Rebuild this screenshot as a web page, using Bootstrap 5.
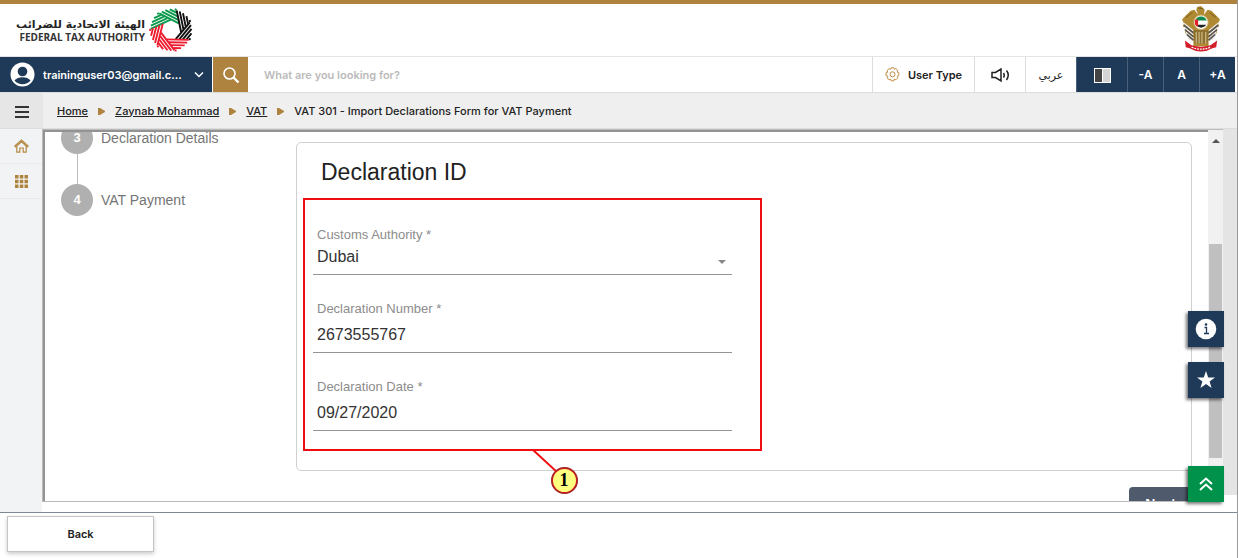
<!DOCTYPE html>
<html lang="en">
<head>
<meta charset="utf-8">
<meta name="viewport" content="width=device-width, initial-scale=1">
<title>VAT 301 - Import Declarations Form for VAT Payment</title>
<link href="https://cdn.jsdelivr.net/npm/bootstrap@5.3.0/dist/css/bootstrap.min.css" rel="stylesheet">
<style>
:root{--navy:#1f3a58;--gold:#ad833f;--form:"Liberation Sans",Arial,sans-serif}
body{font:500 11px/16px Inter,"DejaVu Sans",sans-serif;color:#222;background:#fff;overflow:hidden}
button,input,select{font:inherit;color:inherit}
.page{height:100vh;border-right:1px solid #999}
.brandbar{border-top:4px solid var(--gold);height:57px;border-bottom:1px solid #e4e4e4;padding:0 17px 0 17px}
.brandname{width:128px;text-align:right;white-space:nowrap}
.brand-ar{font:700 11px/13px "DejaVu Sans",sans-serif}
.brand-en{font:700 10px/12px "Open Sans",sans-serif;color:#333}
.toolbar{height:36px;border-bottom:1px solid #ddd;padding-right:2px}
.toolbar button{border:0;border-left:1px solid #ddd;background:#fff;border-radius:0;padding:0}
.toolbar .user{width:212px;background:var(--navy);color:#fff;padding:0 8px 0 10px;border:0;font-weight:600}
.toolbar .find{width:36px;background:var(--gold);border-left:1px solid #fff}
.toolbar input{border:0;outline:0;padding:0 16px;min-width:0;font-weight:600}
.toolbar input::placeholder{color:#bbb;opacity:1}
.toolbar .kind{width:102px;font-weight:600}
.toolbar .mid{width:51px}
.toolbar .dark{background:var(--navy);color:#fff;width:36px;font-weight:600;font-size:12px;border-color:#4a6079}
.toolbar .dark.mid{width:51px}
.crumbs{height:36px;background:#efefef;border-bottom:1px solid #ddd}
.menu{width:43px;background:#e6e6e6;border:0}
.crumbs a{color:#222}
.crumbs ol{gap:10px;padding-left:14px}
.side{width:42px;background:#f2f3f5}
.side a{height:35px;border-bottom:1px solid #e9eaec}
.frame{border:1px solid #bbb;border-width:1px 0 1px 1px;margin-bottom:10px}
.pane{border:2px solid #939393;border-width:2px 0 0 2px;overflow:hidden;font-family:var(--form);font-weight:400}
.scrolled{margin-top:-10px;padding:0 16px}
.steps{width:235px;color:#757575;font-size:14px}
.dot{width:32px;height:32px;border-radius:50%;background:#b0b0b0;color:#fff;font-size:13px;font-weight:700;opacity:1}
.link{width:1px;height:30px;background:#bdbdbd;margin-left:16px}
.form-card{border:1px solid #d0d0d0;border-radius:5px;margin-top:20px;padding:0 6px 19px}
.form-card h1{font-size:23px;line-height:28px;margin:15px 0 12px 18px;font-weight:400}
.marked{border:2px solid #f00d12;max-width:459px;padding:25px 28px 18px 8px}
.entry{border-bottom:1px solid #949494;padding:0 4px}
.entry label{font-size:13px;line-height:20px;color:#8c8c8c;display:block}
.entry input,.entry select{border:0;outline:0;width:100%;padding:0;background:none;appearance:none;font-size:16px;height:24px;display:block;color:#333}
.entry.pick{height:50px}
.entry.text{height:54px}
.caret{right:6px;bottom:10px;border:4px solid transparent;border-top-color:#888;border-bottom:0}
.leader{left:50%;top:100%;margin-left:-2px}
.callnum{left:50%;top:100%;margin:18px 0 0 18px;width:27px;height:27px;border-radius:50%;border:2px solid #d81015;outline:1px solid #5558;outline-offset:-1px;background:#ffff80;color:#000;font:700 18px/23px "Liberation Serif",serif;text-align:center}
.next{background:#4f5b6d;color:#fff;border:0;border-radius:4px;width:63px;height:34px;margin-top:16px;font:700 14px/20px var(--form)}
.track{width:15px;background:#f1f1f1}
.arrow{border:4px solid transparent;border-bottom-color:#555;border-top:0;margin-top:9px}
.thumb{width:13px;background:#c0c0c0;margin-top:101px;margin-bottom:43px}
.edge{width:14px;background:#e4e4e4;margin-bottom:17px}
.floats{right:14px;bottom:56px}
.floats a{width:36px;height:36px;background:var(--navy);box-shadow:-2px 2px 3px #0008}
.floats .info{margin-bottom:15px}
.floats .star{margin-bottom:68px}
.floats a.up{background:#00924a}
.foot{border-top:1px solid #7d8a96;padding:3px 7px 6px}
.back{width:147px;height:36px;border:1px solid #c4c4c8;background:#fff;box-shadow:0 2px 4px #0003;font-weight:600}
</style>
</head>
<body>
<div class="page d-flex flex-column">
<header class="brandbar d-flex flex-shrink-0 justify-content-between align-items-center">
  <div class="d-flex align-items-center gap-1">
    <div class="brandname"><div class="brand-ar" lang="ar" dir="rtl">الهيئة الاتحادية للضرائب</div><div class="brand-en">FEDERAL TAX AUTHORITY</div></div>
    <svg width="44" height="44" viewBox="-22 -22 44 44" fill="none" stroke-width="1.9" aria-label="Federal Tax Authority">
      <defs><g id="blade"><path d="M4-9.500H-18M1.800-12.300H-16.500M-.4-15.100H-14M-2.600-17.900H-10.500M-4-20.300H-6"/></g></defs>
      <g transform="rotate(12)">
      <g stroke="#0a9a4c"><use href="#blade" transform="rotate(15)"/><use href="#blade" transform="rotate(-36.400)"/></g>
      <g stroke="#111"><use href="#blade" transform="rotate(66.400)"/><use href="#blade" transform="rotate(117.900)"/></g>
      <g stroke="#ee1c2e"><use href="#blade" transform="rotate(169.300)"/><use href="#blade" transform="rotate(220.700)"/><use href="#blade" transform="rotate(272.100)"/></g>
      </g>
    </svg>
  </div>
  <svg width="38" height="48" viewBox="0 0 40 50" preserveAspectRatio="none" aria-label="United Arab Emirates emblem">
    <path d="M17 9 13 4 9 5 4 10 0 14 2 18 1 21 4 24 3 28 7 30 7 34 12 37 12 42H28V37L33 34 33 30 37 28 36 24 39 21 38 18 40 14 36 10 31 5 27 4 23 9 24 4 20 0 16 1 15 4Z" fill="#b08a32"/>
    <path d="M2 18 12 26M2 22l10 8M4 27l8 7M6 32l6 5M38 18l-10 8M38 22l-10 8M36 27l-8 7M34 32l-6 5" stroke="#eee" stroke-width="1.400"/>
    <path d="M2 20l10 8M3 24.500l9 7.500M5 29.500l7 6M38 20l-10 8M37 24.500l-9 7.500M35 29.500l-7 6" stroke="#555" stroke-width="1.600"/>
    <path d="M12 25h16l-1 14H13Z" fill="#8e7130"/><path d="M15 27v12M18 27v12M21 27v12M25 27v12" stroke="#ddcf9f"/>
    <path d="M4 12 11 7M29 7l7 5M17 2l5 1" stroke="#785b1d"/>
    <circle cx="20" cy="17" r="7.500" fill="#fff" stroke="#c8b06c"/>
    <path d="M14 15a6.500 6.500 0 0 1 12 0Z" fill="#0a8a4c"/><path d="M14.500 19.500h11a6.500 6.500 0 0 1-11 0Z" fill="#222"/><path d="M14 14h3v7h-2a7 7 0 0 1-1-7Z" fill="#e0202a"/>
    <path d="M3 36 10 41Q20 44 30 41L37 36 36 43 32 44Q20 51 8 44L4 43Z" fill="#d31f2b"/>
    <path d="M10 43Q20 47 30 43" stroke="#fff" stroke-width="1.300" stroke-dasharray="2 1" fill="none"/>
  </svg>
</header>
<nav class="toolbar d-flex align-items-stretch flex-shrink-0" aria-label="Tools">
  <button class="user d-flex align-items-center">
    <svg width="25" height="25" viewBox="0 0 25 25"><circle cx="12.500" cy="12.500" r="12" fill="#fff"/><circle cx="12.500" cy="9.500" r="4.800" fill="#1f3a58"/><path d="M4.500 18.500c3-4.500 13-4.500 16 0-4 5-12 5-16 0Z" fill="#1f3a58"/></svg>
    <span class="ms-2">traininguser03@gmail.c...</span>
    <svg class="ms-auto" width="10" height="8" fill="none" stroke="#fff" stroke-width="1.500"><path d="m1 1.500 4 4 4-4"/></svg>
  </button>
  <button class="find" aria-label="Search"><svg width="18" height="18" fill="none" stroke="#fff" stroke-width="1.600"><circle cx="7.500" cy="7.500" r="5.500"/><path d="m11.500 11.500 5 5" stroke-width="2.400"/></svg></button>
  <input class="flex-grow-1" type="search" placeholder="What are you looking for?" aria-label="Search the site">
  <button class="kind d-flex align-items-center justify-content-center gap-2">
    <svg width="15" height="15" viewBox="0 0 15 15" fill="none" stroke="#c28b45"><path d="M6.200.8h2.600l.5 1.500 1.500-.7 2.100 2-.8 1.500 1.700.7v2.800l-1.700.6.8 1.600-2 2-1.600-.7-.5 1.700H6.200l-.6-1.700-1.500.7-2.100-2 .8-1.600L1 8.600V5.800l1.800-.7L2 3.600l2.100-2 1.500.7Z"/><circle cx="7.500" cy="7.300" r="2.500"/></svg>User Type</button>
  <button class="mid" aria-label="Listen"><svg width="19" height="15" fill="none" stroke="#222" stroke-width="1.500"><path d="M1 4.500h3.500L10 1v12L4.500 9.500H1ZM12.500 5q1.500 2.500 0 4.500M15.500 2.500q3.500 4.500 0 9.500"/></svg></button>
  <button class="mid" lang="ar">عربي</button>
  <button class="dark mid" aria-label="Contrast"><svg width="17" height="15"><path d="M0 0h17v15H0Z" fill="#fff"/><path d="M1 1h7v13H1Z" fill="#444"/><path d="M9 1h7v13H9Z" fill="#d5d5d5"/></svg></button>
  <button class="dark">-A</button><button class="dark">A</button><button class="dark">+A</button>
</nav>
<div class="crumbs d-flex align-items-stretch flex-shrink-0">
  <button class="menu" aria-label="Menu"><svg width="14" height="12" stroke="#333" stroke-width="1.800"><path d="M0 1h14M0 6h14M0 11h14"/></svg></button>
  <ol class="list-unstyled d-flex align-items-center mb-0">
    <li><a href="#">Home</a></li><li aria-hidden="true"><svg width="7" height="8"><path d="M0 0h2l5 3v1L2 7H0Z" fill="#ad833f"/></svg></li>
    <li><a href="#">Zaynab Mohammad</a></li><li aria-hidden="true"><svg width="7" height="8"><path d="M0 0h2l5 3v1L2 7H0Z" fill="#ad833f"/></svg></li>
    <li><a href="#">VAT</a></li><li aria-hidden="true"><svg width="7" height="8"><path d="M0 0h2l5 3v1L2 7H0Z" fill="#ad833f"/></svg></li>
    <li>VAT 301 - Import Declarations Form for VAT Payment</li>
  </ol>
</div>
<div class="d-flex flex-grow-1" style="min-height:0">
  <nav class="side flex-shrink-0" aria-label="Sections">
    <a href="#" class="d-flex align-items-center justify-content-center" aria-label="Dashboard"><svg width="15" height="14" viewBox="0 0 15 14" fill="none" stroke="#b58a45" stroke-width="1.200"><path d="m.8 7 6.700-6 6.700 6-1 .9-5.700-5-5.700 5ZM2.800 7.500v5.700h3V9h3.400v4.200h3V7.500"/></svg></a>
    <a href="#" class="d-flex align-items-center justify-content-center" aria-label="Services"><svg width="13" height="13" fill="#ad833f"><path d="M0 0h3.500v3.500H0ZM4.800 0h3.500v3.500H4.800ZM9.500 0H13v3.500H9.500ZM0 4.800h3.500v3.500H0ZM4.800 4.800h3.500v3.500H4.800ZM9.500 4.800H13v3.500H9.500ZM0 9.500h3.500V13H0ZM4.800 9.500h3.500V13H4.800ZM9.500 9.500H13V13H9.500Z"/></svg></a>
  </nav>
  <div class="frame d-flex flex-grow-1">
    <main class="pane flex-grow-1">
      <div class="scrolled">
        <div class="d-flex">
          <aside class="steps flex-shrink-0">
            <div class="d-flex align-items-center gap-2"><span class="dot d-flex align-items-center justify-content-center">3</span>Declaration Details</div>
            <div class="link"></div>
            <div class="d-flex align-items-center gap-2"><span class="dot d-flex align-items-center justify-content-center">4</span>VAT Payment</div>
          </aside>
          <form class="form-card flex-grow-1">
            <h1>Declaration ID</h1>
            <div class="marked position-relative d-flex flex-column">
              <div class="entry pick position-relative"><label for="auth">Customs Authority *</label><select id="auth"><option>Dubai</option></select><span class="caret position-absolute"></span></div>
              <div class="entry text mt-4"><label for="num">Declaration Number *</label><input id="num" class="mt-1" type="text" value="2673555767"></div>
              <div class="entry text mt-4"><label for="date">Declaration Date *</label><input id="date" class="mt-1" type="text" value="09/27/2020"></div>
              <svg class="leader position-absolute" width="26" height="24" stroke="#f00d12" stroke-width="2"><path d="m1 0 25 23"/></svg>
              <span class="callnum position-absolute">1</span>
            </div>
          </form>
        </div>
        <div class="text-end"><button class="next">Next</button></div>
      </div>
    </main>
    <div class="track d-flex flex-column align-items-center" aria-hidden="true"><span class="arrow"></span><span class="thumb flex-grow-1"></span></div>
  </div>
  <div class="edge flex-shrink-0"></div>
</div>
<footer class="foot"><button class="back">Back</button></footer>
</div>
<div class="floats position-fixed d-flex flex-column">
  <a href="#" class="info d-flex align-items-center justify-content-center" aria-label="Information"><svg width="22" height="22"><circle cx="11" cy="11" r="10.300" fill="#fff"/><path d="M9.500 9.500h2V15.500M9 15.500h5" stroke="#1f3a58" stroke-width="1.300" fill="none"/><circle cx="11" cy="6.500" r="1.300" fill="#1f3a58"/></svg></a>
  <a href="#" class="star d-flex align-items-center justify-content-center" aria-label="Favourites"><svg width="18" height="18"><path d="m9 0 2.200 6.400H18l-5.400 4.100 2 6.500L9 13.100 3.400 17l2-6.500L0 6.400h6.800Z" fill="#fff"/></svg></a>
  <a href="#" class="up d-flex align-items-center justify-content-center" aria-label="Back to top"><svg width="14" height="14" fill="none" stroke="#fff" stroke-width="2"><path d="m1 7 6-5.500L13 7M1 13l6-5.500 6 5.500"/></svg></a>
</div>
<script src="https://cdn.jsdelivr.net/npm/bootstrap@5.3.0/dist/js/bootstrap.bundle.min.js"></script>
</body>
</html>
